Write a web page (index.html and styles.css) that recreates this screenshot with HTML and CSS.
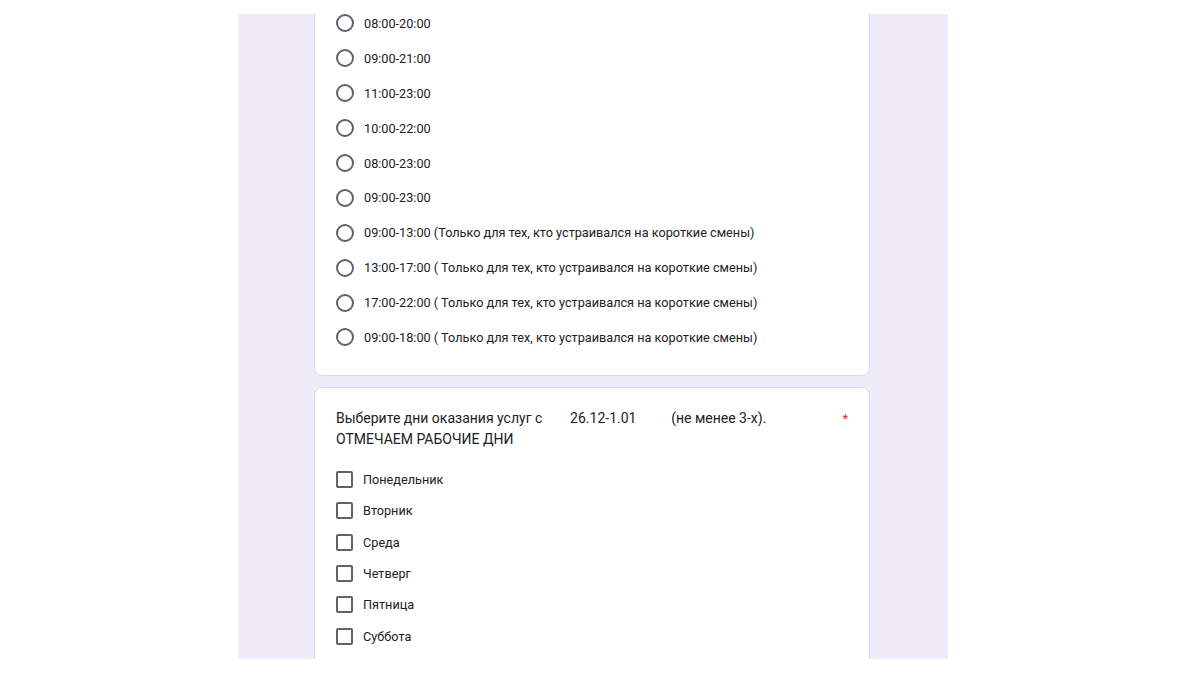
FILE: index.html
```html
<!DOCTYPE html>
<html lang="ru">
<head>
    <meta charset="UTF-8">
    <meta name="viewport" content="width=device-width, initial-scale=1.0">
    <title>Форма</title>
    <link rel="stylesheet" href="styles.css">
</head>
<body>
    <div class="form-bg">
        <div class="card card-scrolled">
            <div class="radio-list">
                <label class="radio-row"><span class="radio"></span>08:00-20:00</label>
                <label class="radio-row"><span class="radio"></span>09:00-21:00</label>
                <label class="radio-row"><span class="radio"></span>11:00-23:00</label>
                <label class="radio-row"><span class="radio"></span>10:00-22:00</label>
                <label class="radio-row"><span class="radio"></span>08:00-23:00</label>
                <label class="radio-row"><span class="radio"></span>09:00-23:00</label>
                <label class="radio-row"><span class="radio"></span>09:00-13:00 (Только для тех, кто устраивался на короткие смены)</label>
                <label class="radio-row"><span class="radio"></span>13:00-17:00 ( Только для тех, кто устраивался на короткие смены)</label>
                <label class="radio-row"><span class="radio"></span>17:00-22:00 ( Только для тех, кто устраивался на короткие смены)</label>
                <label class="radio-row"><span class="radio"></span>09:00-18:00 ( Только для тех, кто устраивался на короткие смены)</label>
            </div>
        </div>

        <div class="card">
            <div class="question-title">
                <div class="title-text">Выберите дни оказания услуг с        26.12-1.01          (не менее 3-х).
ОТМЕЧАЕМ РАБОЧИЕ ДНИ</div>
                <span class="required">*</span>
            </div>
            <div class="check-list">
                <label class="check-row"><span class="checkbox"></span>Понедельник</label>
                <label class="check-row"><span class="checkbox"></span>Вторник</label>
                <label class="check-row"><span class="checkbox"></span>Среда</label>
                <label class="check-row"><span class="checkbox"></span>Четверг</label>
                <label class="check-row"><span class="checkbox"></span>Пятница</label>
                <label class="check-row"><span class="checkbox"></span>Суббота</label>
            </div>
        </div>
    </div>
</body>
</html>
```

FILE: styles.css
```css
:root {
    --form-bg: #f0ebf8;
    --text-color: #202124;
    --control-color: #5f6368;
    --border-color: #dadce0;
    --required-color: #d93025;
}
body {
    margin: 0;
    background-color: #ffffff;
    font-family: Roboto, 'Noto Sans', Arial, sans-serif;
    color: var(--text-color);
}
.form-bg {
    margin: 14px 0 0 238px;
    width: 710px;
    height: 645px;
    overflow: hidden;
    background-color: var(--form-bg);
    display: flex;
    flex-direction: column;
    gap: 11px;
}
.card {
    margin-left: 76px;
    width: 556px;
    box-sizing: border-box;
    background-color: #ffffff;
    border: 1px solid var(--border-color);
    border-radius: 8px;
    padding: 20px 21px 20px 21px;
    flex-shrink: 0;
}
/* top of this card is scrolled out of view */
.card-scrolled {
    margin-top: -8px;
    padding-top: 0;
    border-top: none;
    border-radius: 0 0 8px 8px;
}
.radio-row,
.check-row {
    display: flex;
    align-items: center;
    font-size: 12.7px;
}
.radio-row {
    height: 34.9px;
}
.check-row {
    height: 31.3px;
}
.radio {
    width: 18px;
    height: 18px;
    box-sizing: border-box;
    border: 2px solid var(--control-color);
    border-radius: 50%;
    margin-right: 10px;
    flex-shrink: 0;
}
.checkbox {
    width: 17px;
    height: 17px;
    box-sizing: border-box;
    border: 2px solid var(--control-color);
    border-radius: 2px;
    margin-right: 10px;
    flex-shrink: 0;
}
.question-title {
    display: flex;
    justify-content: space-between;
    align-items: flex-start;
    font-size: 14px;
    line-height: 21px;
    margin-bottom: 14px;
}
.title-text {
    white-space: pre-wrap;
}
.required {
    color: var(--required-color);
    margin-left: 12px;
    margin-right: 0;
    font-size: 13px;
}
```
